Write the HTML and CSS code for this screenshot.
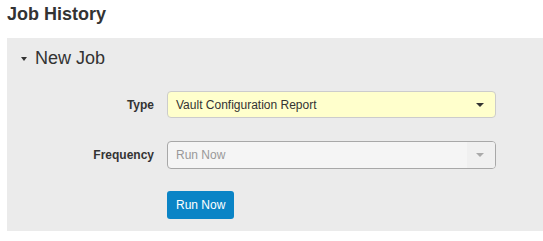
FILE: index.html
```html
<!DOCTYPE html>
<html lang="en">
<head>
  <meta charset="UTF-8">
  <title>Job History</title>
  <link rel="stylesheet" href="styles.css">
</head>
<body>
  <h1 class="page-title">Job History</h1>
  <div class="panel">
    <h2 class="panel-title">
      <svg class="caret" width="6" height="4" viewBox="0 0 6 4"><path d="M0 0h6L3 4z" fill="#333"/></svg>
      New Job
    </h2>
    <div class="form">
      <label class="label">Type</label>
      <div class="select select-type">
        <span>Vault Configuration Report</span>
        <span class="arrow">
          <svg width="8" height="4" viewBox="0 0 8 4"><path d="M0 0h8L4 4z" fill="#333"/></svg>
        </span>
      </div>

      <label class="label">Frequency</label>
      <div class="select select-disabled">
        <span>Run Now</span>
        <span class="arrow">
          <svg width="8" height="4" viewBox="0 0 8 4"><path d="M0 0h8L4 4z" fill="#aaa"/></svg>
        </span>
      </div>

      <div></div>
      <div class="actions">
        <button class="btn">Run Now</button>
      </div>
    </div>
  </div>
</body>
</html>
```

FILE: styles.css
```css
body {
  margin: 0;
  font-family: "Liberation Sans", Arial, sans-serif;
  color: #333;
  background: #fff;
}
.page-title {
  font-size: 18px;
  font-weight: bold;
  line-height: 21px;
  margin: 0;
  padding: 4px 0 0 7px;
  height: 38px;
  box-sizing: border-box;
}
.panel {
  margin-left: 7px;
  background: #ebebeb;
  padding: 10px 47px 12px 0;
  height: 193px;
  box-sizing: border-box;
}
.panel-title {
  display: flex;
  align-items: center;
  font-size: 18px;
  font-weight: normal;
  line-height: 21px;
  margin: 0;
  padding-left: 14px;
}
.caret {
  margin-right: 8px;
  margin-top: 1px;
}
.form {
  display: grid;
  grid-template-columns: 147px 1fr;
  column-gap: 13px;
  row-gap: 23px;
  align-items: center;
  margin-top: 22px;
}
.label {
  text-align: right;
  font-size: 12px;
  font-weight: bold;
}
.select {
  display: flex;
  align-items: center;
  justify-content: space-between;
  height: 27px;
  box-sizing: border-box;
  border: 1px solid #ccc;
  border-radius: 4px;
  font-size: 12px;
  padding-left: 8px;
  overflow: hidden;
}
.select-type {
  background: #ffffcc;
  color: #333;
}
.select-disabled {
  height: 28px;
  background: #f5f5f5;
  border-color: #a8a8a8;
  color: #999;
}
.arrow {
  display: flex;
  align-items: center;
  justify-content: center;
  width: 26px;
  height: 100%;
  padding-right: 2px;
}
.select-disabled .arrow {
  background: #f0f0f0;
}
.actions {
  margin-top: -1px;
}
.btn {
  font-family: inherit;
  font-size: 12px;
  color: #fff;
  background: #0a84c6;
  border: none;
  border-radius: 3px;
  height: 28px;
  padding: 0 9px;
  cursor: pointer;
}
```
